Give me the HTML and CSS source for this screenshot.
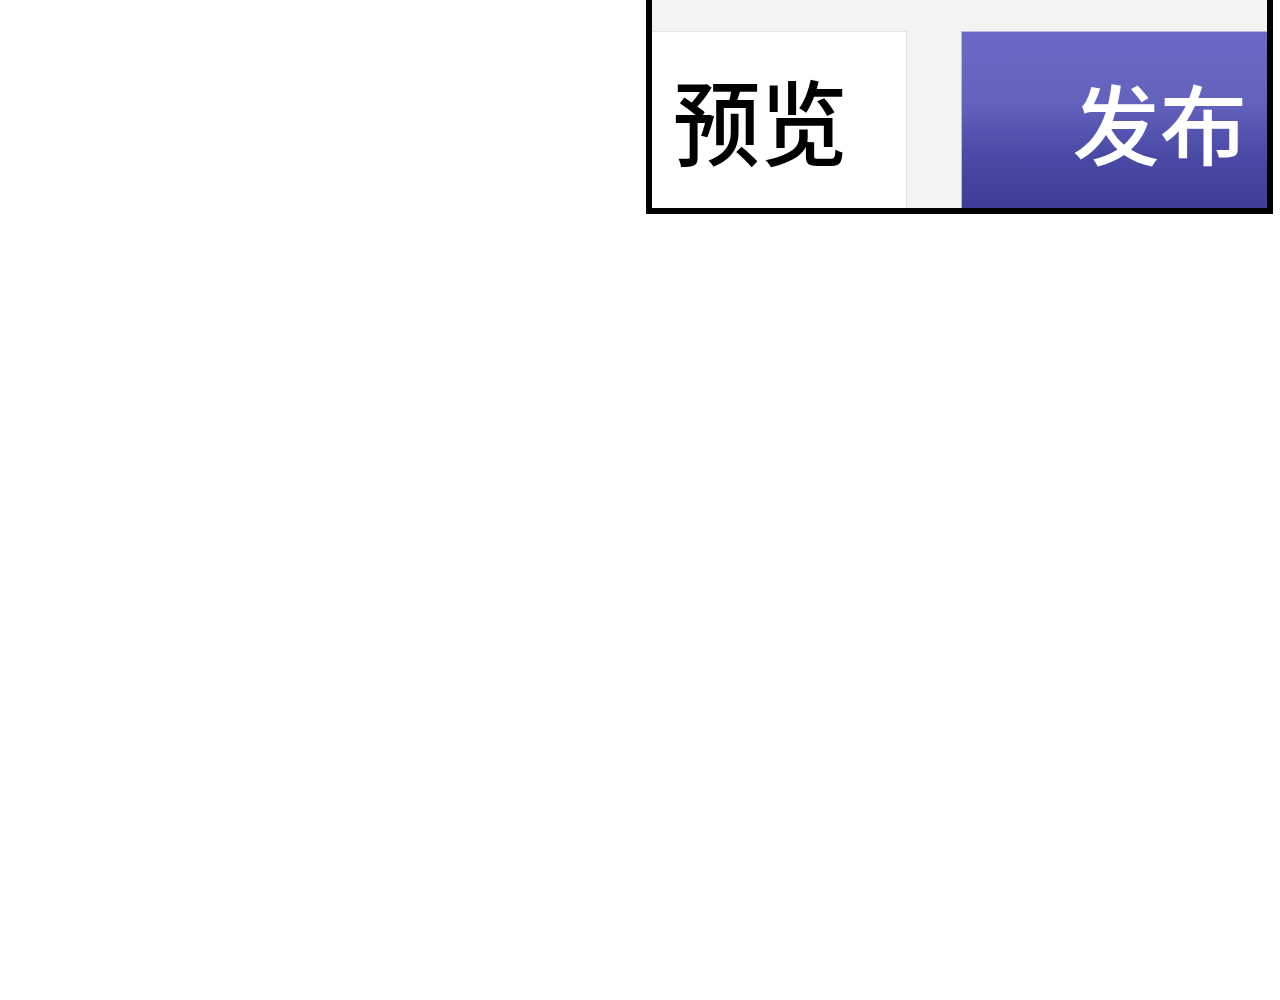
FILE: index.html
```html
<!DOCTYPE html>
<html lang="zh">
<head>
<meta charset="utf-8">
<title>预览 发布</title>
<link rel="stylesheet" href="styles.css">
</head>
<body>
<div class="page">
  <div class="toolbar">
    <button class="btn btn-preview"><span class="label">预览</span></button>
    <button class="btn btn-publish"><span class="label">发布</span></button>
  </div>
</div>
</body>
</html>
```
FILE: styles.css
```css
html, body {
  margin: 0;
  padding: 0;
  background: #ffffff;
}
.page {
  display: flex;
  justify-content: flex-end;
  padding-right: 7px;
}
.toolbar {
  box-sizing: border-box;
  width: 627px;
  height: 214px;
  border: 6px solid #000;
  border-top: 0;
  background: #f3f3f3;
  padding-top: 31px;
  display: flex;
  gap: 54px;
}
.btn {
  margin: 0;
  padding: 0;
  height: 177px;
  font-family: "Noto Sans CJK SC", sans-serif;
  font-size: 90px;
  font-weight: 500;
  line-height: 1;
  cursor: pointer;
  display: flex;
  align-items: center;
  box-sizing: border-box;
}
.btn-preview {
  width: 255px;
  background: #ffffff;
  color: #000;
  border: 1px solid #e3e3e3;
  border-left: 0;
  border-bottom: 0;
  justify-content: flex-start;
  padding-left: 21px;
}
.btn-publish {
  width: 306px;
  background: linear-gradient(to bottom, #6a6ac6 0%, #6363be 40%, #4a4aa6 70%, #3e3e98 100%);
  color: #fff;
  border: 1px solid #b9b9e4;
  border-right: 0;
  border-bottom: 0;
  justify-content: flex-end;
  padding-right: 20px;
}
.label {
  display: inline-block;
}
.btn-preview .label {
  transform-origin: left center;
  transform: translateY(-1px) scale(0.97, 1.03);
}
.btn-publish .label {
  transform-origin: right center;
  transform: translateY(1px) scale(0.97, 0.97);
}
```
